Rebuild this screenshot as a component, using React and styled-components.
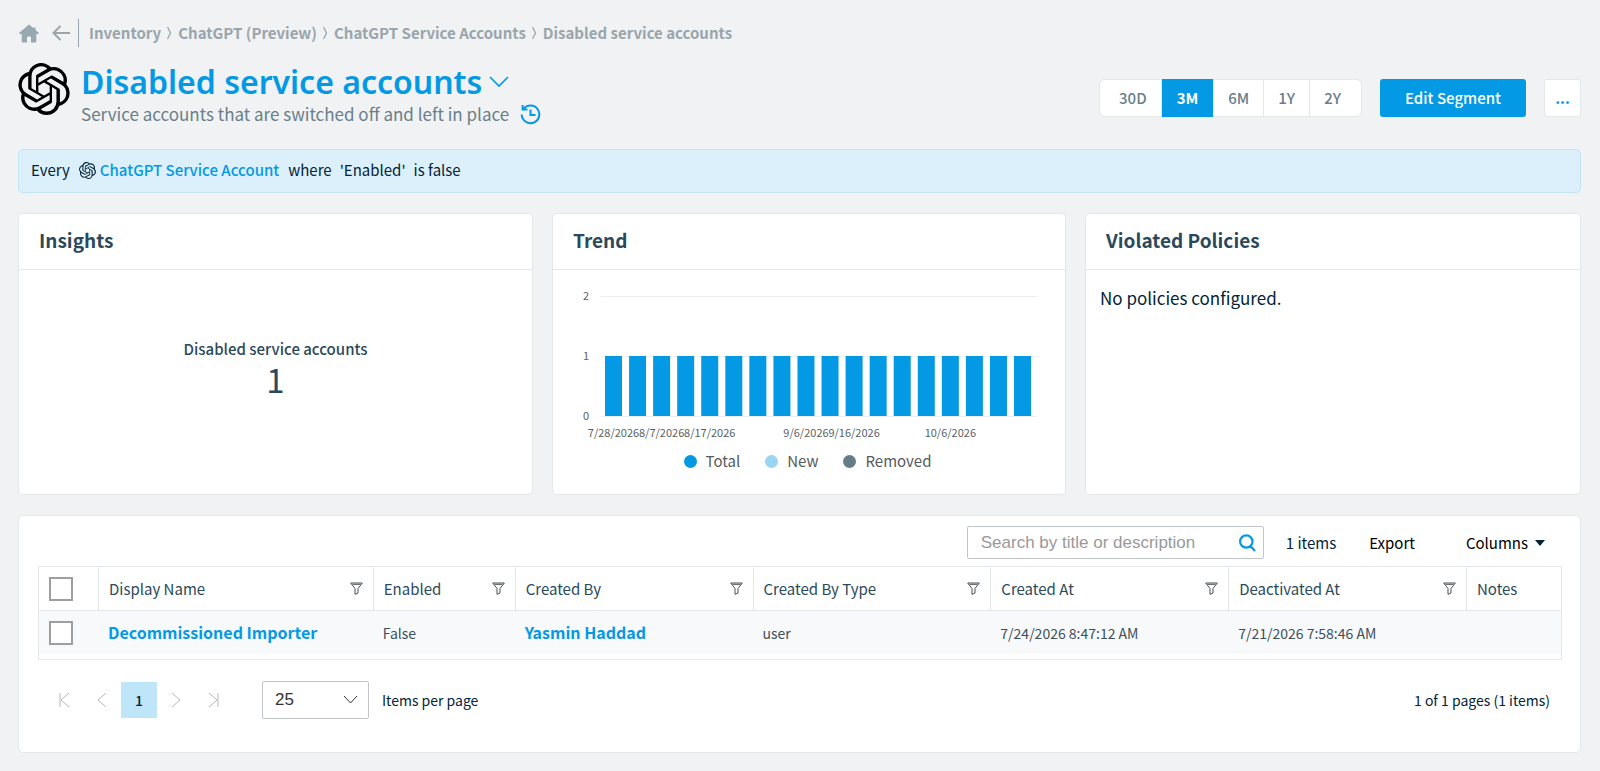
import React from "react";
import styled, { createGlobalStyle, css } from "styled-components";
import { SiOpenai } from "react-icons/si";

const c = {
  blue: "#0399e5",
  page: "#f0f2f4",
  line: "#e5e8ea",
  ink: "#022338",
  navy: "#2b495b",
  slate: "#697e89",
  crumb: "#9aa5ab",
};

const Global = createGlobalStyle`
  *, *::before, *::after { box-sizing: border-box; }
  body {
    margin: 0;
    background: ${c.page};
    color: ${c.ink};
    font: 400 15px/20px "Noto Sans CJK SC", "Noto Sans", sans-serif;
  }
  button, select, input { font: inherit; color: inherit; margin: 0; }
  button { padding: 0; border: 0; background: none; cursor: pointer; }
  a { color: inherit; text-decoration: none; }
  h1, h2, p { margin: 0; }
  svg { display: block; flex: none; }
`;

const Page = styled.main`
  display: flex;
  flex-direction: column;
  padding: 19px 19px 18px 18px;
`;

const Crumbs = styled.nav`
  display: flex;
  align-items: center;
  height: 28px;
  color: ${c.crumb};
  font-weight: 700;
`;
const CrumbTools = styled.div`
  display: flex;
  align-items: center;
  gap: 13px;
  height: 28px;
  padding: 0 7px 0 1px;
  border-right: 1px solid ${c.crumb};
  margin-right: 10px;
`;
const CrumbList = styled.ol`
  display: flex;
  gap: 6px;
  margin: 0;
  padding: 0;
  list-style: none;
`;
const Crumb = styled.li`
  display: flex;
  align-items: center;
  gap: 5px;
`;

const Header = styled.header`
  display: flex;
  align-items: center;
  justify-content: space-between;
  height: 102px;
`;
const Identity = styled.div`
  display: flex;
  align-self: flex-start;
  gap: 11px;
  padding-top: 16px;
`;
const TitleLine = styled.div`
  display: flex;
  align-items: center;
  gap: ${(p) => p.$gap}px;
`;
const Title = styled.h1`
  color: ${c.blue};
  font: 600 32px/38px "Noto Sans", "Open Sans", sans-serif;
`;
const Subtitle = styled.p`
  color: ${c.slate};
  font-size: 17px;
  line-height: 26px;
`;
const Actions = styled.div`
  display: flex;
  align-items: center;
  gap: 18px;
`;
const Ranges = styled.div`
  display: flex;
  height: 38px;
  border: 1px solid ${c.line};
  border-radius: 6px;
  background: #fff;
`;
const Range = styled.button`
  padding: 0 14px;
  color: ${c.slate};
  font-weight: 500;
  & + & { border-left: 1px solid ${c.line}; }
  &:first-child { padding: 0 14px 0 19px; }
  &:last-child { padding: 0 20px 0 14px; }
  ${(p) => p.$active && css`
    padding: 0 15px;
    background: ${c.blue};
    color: #fff;
    font-weight: 700;
    margin: -1px 0;
  `}
`;
const Primary = styled.button`
  height: 38px;
  padding: 0 25px;
  border-radius: 3px;
  background: ${c.blue};
  color: #fff;
  font-weight: 500;
`;
const More = styled.button`
  width: 37px;
  height: 38px;
  border: 1px solid ${c.line};
  border-radius: 3px;
  background: #fff;
  color: ${c.blue};
  font-weight: 700;
`;

const Query = styled.section`
  display: flex;
  align-items: center;
  gap: 8px;
  height: 44px;
  padding: 0 12px 2px;
  border: 1px solid #c2e4f5;
  border-radius: 5px;
  background: #dcf0fb;
`;
const QueryType = styled.a`
  display: flex;
  align-items: center;
  gap: 4px;
  margin: 0 1px;
  color: ${c.blue};
  font-weight: 500;
`;

const Cards = styled.div`
  display: grid;
  grid-template-columns: 515fr 514fr 496fr;
  gap: 19px;
  margin: 20px 0;
`;
const Card = styled.section`
  display: flex;
  flex-direction: column;
  border: 1px solid ${c.line};
  border-radius: 5px;
  background: #fff;
  min-width: 0;
`;
const CardTitle = styled.h2`
  padding: 14px 20px 17px;
  border-bottom: 1px solid ${c.line};
  color: ${c.navy};
  font-size: 19px;
  line-height: 24px;
  font-weight: 700;
`;
const Metric = styled.div`
  flex: 1;
  display: flex;
  flex-direction: column;
  align-items: center;
  justify-content: center;
  padding-bottom: 26px;
  color: ${c.navy};
  font-weight: 500;
`;
const MetricValue = styled.span`
  font-size: 33px;
  line-height: 40px;
  font-weight: 400;
`;
const Chart = styled.svg`
  width: 100%;
  height: auto;
  font-size: 11px;
  fill: #5a5f63;
`;
const Legend = styled.ul`
  display: flex;
  justify-content: center;
  gap: 25px;
  margin: 0;
  padding: 7px 3px 23px 0;
  list-style: none;
  color: #555b60;
`;
const LegendItem = styled.li`
  display: flex;
  align-items: center;
  gap: 9px;
  &::before {
    content: "";
    width: 13px;
    height: 13px;
    border-radius: 50%;
    background: ${(p) => p.$color};
  }
`;
const Empty = styled.p`
  padding: 16px 14px;
  font-size: 17px;
  line-height: 24px;
`;

const ListCard = styled(Card)`
  padding: 10px 18px 25px 19px;
`;
const Toolbar = styled.div`
  display: flex;
  justify-content: flex-end;
  align-items: center;
  padding-right: 17px;
  margin-bottom: 7px;
`;
const Search = styled.label`
  display: flex;
  align-items: center;
  width: 297px;
  height: 33px;
  padding: 0 7px 0 13px;
  border: 1px solid #c3c6c8;
  border-radius: 2px;
  margin-right: 22px;
`;
const SearchInput = styled.input`
  flex: 1;
  min-width: 0;
  padding: 0;
  border: 0;
  outline: 0;
  background: none;
  font: 400 17px/20px "Liberation Sans", Arial, sans-serif;
  &::placeholder { color: #999; opacity: 1; }
`;
const Tool = styled.button`
  display: flex;
  align-items: center;
  gap: 7px;
  margin-left: ${(p) => p.$space}px;
  color: #000;
`;

const Table = styled.table`
  width: 100%;
  table-layout: fixed;
  border-collapse: separate;
  border-spacing: 0;
  border: 1px solid ${c.line};
  padding-bottom: 5px;
`;
const Th = styled.th`
  height: 44px;
  padding: 0 10px;
  border-bottom: 1px solid ${c.line};
  color: ${c.navy};
  font-weight: 400;
  text-align: left;
  & + & { border-left: 1px solid ${c.line}; }
`;
const ThInner = styled.div`
  display: flex;
  align-items: center;
  justify-content: space-between;
`;
const Td = styled.td`
  height: 43px;
  padding: 0 10px;
  background: #f7f9fb;
  color: #3d4f5a;
  font-size: 14px;
`;
const RowLink = styled.a`
  color: ${c.blue};
  font-size: 16px;
  font-weight: 700;
`;
const Check = styled.input`
  appearance: none;
  display: block;
  width: 24px;
  height: 24px;
  margin: 0;
  border: 2px solid #9e9e9e;
  background: #fff;
`;

const Pager = styled.div`
  display: flex;
  align-items: center;
  margin-top: 21px;
  padding: 0 12px 8px 7px;
  font-size: 14px;
`;
const PageButtons = styled.div`
  display: flex;
  align-items: center;
  margin-right: 29px;
  color: #b3b8bb;
`;
const PageIcon = styled.button`
  display: flex;
  justify-content: center;
  width: 38px;
`;
const Current = styled.button`
  width: 36px;
  height: 36px;
  background: #bee6f8;
  color: ${c.ink};
  font-weight: 500;
`;
const SizeLabel = styled.label`
  display: flex;
  flex: 1;
  align-items: center;
  gap: 13px;
`;
const Size = styled.select`
  appearance: none;
  width: 107px;
  height: 38px;
  padding: 0 12px;
  border: 1px solid #c3c6c8;
  border-radius: 2px;
  font: 400 17px/20px "Liberation Sans", Arial, sans-serif;
  color: #333;
  background: #fff;
`;
const SizeBox = styled.span`
  display: grid;
  align-items: center;
  & > * { grid-area: 1 / 1; }
  & > svg { justify-self: end; margin-right: 11px; pointer-events: none; }
`;

const Line = ({ w, h, d, sw = 1, color = "currentColor" }) => (
  <svg width={w} height={h} viewBox={`0 0 ${w} ${h}`} fill="none" stroke={color} strokeWidth={sw} aria-hidden="true">
    <path d={d} />
  </svg>
);
const Home = () => (
  <svg width="20" height="19" viewBox="0 0 20 19" fill="#97a8b0" aria-hidden="true">
    <path d="M10 0.500 L14.500 4.300 V3.500 H16.500 V6 L20 9 L19.300 10 H17.300 V17.500 Q17.300 18.500 16.300 18.500 H12 V13.500 Q12 12.500 11 12.500 H9 Q8 12.500 8 13.500 V18.500 H3.700 Q2.700 18.500 2.700 17.500 V10 H0.700 L0 9 Z" />
  </svg>
);
const Funnel = () => <Line w={13} h={13} d="M0.700 1 H12.300 L8 6.500 V11 L5 12.300 V6.500 Z M2.500 2.300 H10.500" color="#4a4f53" />;

const crumbs = ["Inventory", "ChatGPT (Preview)", "ChatGPT Service Accounts", "Disabled service accounts"];
const ranges = ["30D", "3M", "6M", "1Y", "2Y"];
const totals = Array(18).fill(1);
const dates = { 0: "7/28/2026", 2: "8/7/2026", 4: "8/17/2026", 8: "9/6/2026", 10: "9/16/2026", 14: "10/6/2026" };
const columns = [
  ["Display Name", 275],
  ["Enabled", 142],
  ["Created By", 238],
  ["Created By Type", 238],
  ["Created At", 238],
  ["Deactivated At", 238],
  ["Notes", 95],
];

function TrendChart() {
  const y = (v) => 146 - v * 60;
  return (
    <Chart viewBox="0 0 512 174" role="img" aria-label="Trend">
      {[0, 1, 2].map((v) => (
        <g key={v}>
          <line x1="48" x2="484" y1={y(v) + 0.5} y2={y(v) + 0.5} stroke="#eceeef" />
          <text x="33" y={y(v) + 4} textAnchor="middle">{v}</text>
        </g>
      ))}
      {totals.map((v, i) => (
        <rect key={i} x={52 + i * 24.06} y={y(v)} width="17" height={v * 60} fill={c.blue} />
      ))}
      {Object.entries(dates).map(([i, d]) => (
        <text key={i} x={60.5 + i * 24.06} y="167" textAnchor="middle">{d}</text>
      ))}
    </Chart>
  );
}

export default function App() {
  return (
    <>
      <Global />
      <Page>
        <Crumbs aria-label="Breadcrumb">
          <CrumbTools>
            <a href="#home" aria-label="Home"><Home /></a>
            <a href="#back" aria-label="Back">
              <Line w={19} h={16} sw={2} d="M18 8 H1.500 M8.500 1 L1.500 8 L8.500 15" />
            </a>
          </CrumbTools>
          <CrumbList>
            {crumbs.map((t, i) => (
              <Crumb key={t}>
                <a href={`#crumb-${i}`}>{t}</a>
                {i < crumbs.length - 1 && <Line w={6} h={14} sw={1.3} d="M1.500 1 L4.500 7 L1.500 13" />}
              </Crumb>
            ))}
          </CrumbList>
        </Crumbs>

        <Header>
          <Identity>
            <SiOpenai size={52} color="#000" />
            <div>
              <TitleLine $gap={7}>
                <Title>Disabled service accounts</Title>
                <button aria-label="Switch segment">
                  <Line w={20} h={12} sw={1.6} color={c.blue} d="M1 1 L10 10 L19 1" />
                </button>
              </TitleLine>
              <TitleLine $gap={11}>
                <Subtitle>Service accounts that are switched off and left in place</Subtitle>
                <button aria-label="History">
                  <Line w={21} h={21} sw={2} color={c.blue} d="M3.500 5 A8.800 8.800 0 1 1 1.700 10.500 M2.600 1 V5.500 H7.500 M10.500 5.500 V11 H15.500" />
                </button>
              </TitleLine>
            </div>
          </Identity>
          <Actions>
            <Ranges>
              {ranges.map((r) => <Range key={r} $active={r === "3M"}>{r}</Range>)}
            </Ranges>
            <Primary>Edit Segment</Primary>
            <More aria-label="More actions">...</More>
          </Actions>
        </Header>

        <Query>
          <span>Every</span>
          <QueryType href="#type"><SiOpenai size={17} color={c.ink} />ChatGPT Service Account</QueryType>
          <span>where</span>
          <span>'Enabled'</span>
          <span>is false</span>
        </Query>

        <Cards>
          <Card>
            <CardTitle>Insights</CardTitle>
            <Metric>
              Disabled service accounts
              <MetricValue>1</MetricValue>
            </Metric>
          </Card>
          <Card>
            <CardTitle>Trend</CardTitle>
            <TrendChart />
            <Legend>
              <LegendItem $color={c.blue}>Total</LegendItem>
              <LegendItem $color="#99d5f2">New</LegendItem>
              <LegendItem $color="#667d88">Removed</LegendItem>
            </Legend>
          </Card>
          <Card>
            <CardTitle>Violated Policies</CardTitle>
            <Empty>No policies configured.</Empty>
          </Card>
        </Cards>

        <ListCard>
          <Toolbar>
            <Search>
              <SearchInput placeholder="Search by title or description" aria-label="Search by title or description" />
              <Line w={17} h={18} sw={2.2} color={c.blue} d="M13.500 7.500 A6.200 6.200 0 1 1 1.100 7.500 A6.200 6.200 0 1 1 13.500 7.500 M11.500 12 L16 17" />
            </Search>
            <span>1 items</span>
            <Tool $space={33}>Export</Tool>
            <Tool $space={51}>
              Columns
              <svg width="10" height="6" viewBox="0 0 10 6" fill={c.ink} aria-hidden="true"><path d="M0 0 H10 L5 6 Z" /></svg>
            </Tool>
          </Toolbar>
          <Table>
            <colgroup>
              <col style={{ width: `${(59 / 1523) * 100}%` }} />
              {columns.map(([n, w]) => <col key={n} style={{ width: `${(w / 1523) * 100}%` }} />)}
            </colgroup>
            <thead>
              <tr>
                <Th><Check type="checkbox" aria-label="Select all" /></Th>
                {columns.map(([name]) => (
                  <Th key={name}>
                    <ThInner>
                      {name}
                      {name !== "Notes" && <button aria-label={`Filter ${name}`}><Funnel /></button>}
                    </ThInner>
                  </Th>
                ))}
              </tr>
            </thead>
            <tbody>
              <tr>
                <Td><Check type="checkbox" aria-label="Select Decommissioned Importer" /></Td>
                <Td><RowLink href="#account">Decommissioned Importer</RowLink></Td>
                <Td>False</Td>
                <Td><RowLink href="#user">Yasmin Haddad</RowLink></Td>
                <Td>user</Td>
                <Td>7/24/2026 8:47:12 AM</Td>
                <Td>7/21/2026 7:58:46 AM</Td>
                <Td />
              </tr>
            </tbody>
          </Table>
          <Pager>
            <PageButtons>
              <PageIcon aria-label="First page"><Line w={12} h={16} d="M2 1 V15 M11 1 L3 8 L11 15" /></PageIcon>
              <PageIcon aria-label="Previous page"><Line w={12} h={16} d="M10 1 L2 8 L10 15" /></PageIcon>
              <Current aria-current="page">1</Current>
              <PageIcon aria-label="Next page"><Line w={12} h={16} d="M2 1 L10 8 L2 15" /></PageIcon>
              <PageIcon aria-label="Last page"><Line w={12} h={16} d="M10 1 V15 M1 1 L9 8 L1 15" /></PageIcon>
            </PageButtons>
            <SizeLabel>
              <SizeBox>
                <Size defaultValue="25"><option>25</option><option>50</option></Size>
                <Line w={15} h={10} color="#333" d="M1 1 L7.500 8 L14 1" />
              </SizeBox>
              Items per page
            </SizeLabel>
            <span>1 of 1 pages (1 items)</span>
          </Pager>
        </ListCard>
      </Page>
    </>
  );
}
